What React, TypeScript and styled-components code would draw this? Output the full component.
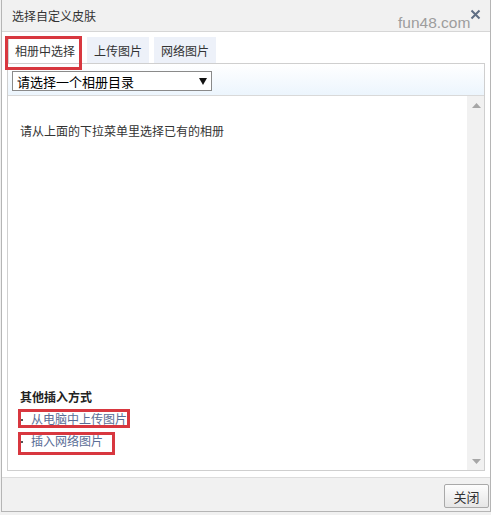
import React from "react";
import styled, { createGlobalStyle } from "styled-components";

const Global = createGlobalStyle`
  html, body { margin: 0; padding: 0; background: #f1f1f1; }
  body { font-family: "Noto Sans CJK SC", "Microsoft YaHei", sans-serif; font-size: 12px; color: #333; }
  * { box-sizing: border-box; }
`;

const Dialog = styled.div`
  position: relative;
  width: 490px;
  margin-left: 1px;
  height: 512px;
  display: flex;
  flex-direction: column;
  background: #f1f1f1;
  border-left: 1px solid #b5b5b5;
  border-right: 1px solid #b5b5b5;
  border-bottom: 1px solid #b5b5b5;
`;

const Header = styled.div`
  height: 32px;
  flex: none;
  display: flex;
  align-items: center;
  justify-content: space-between;
  padding: 0 9px 0 10px;
  border-bottom: 1px solid #d6d6d6;
`;

const Title = styled.div`
  font-size: 12px;
  color: #333;
  line-height: 31px;
`;

const CloseIcon = styled.svg`
  width: 11px;
  height: 11px;
  margin-top: -3px;
`;

const Watermark = styled.div`
  position: absolute;
  left: 396px;
  top: 14px;
  font-family: "Liberation Sans", Arial, sans-serif;
  font-size: 15.5px;
  color: #9d9d9d;
  pointer-events: none;
`;

const Body = styled.div`
  flex: none;
  height: 445px;
  background: #fff;
  padding: 5px 0 6px 5px;
`;

const TabRow = styled.div`
  display: flex;
  gap: 5px;
  height: 26px;
  padding-left: 1px;
`;

const Tab = styled.div<{ $active?: boolean; $boxed?: boolean }>`
  position: relative;
  height: 26px;
  line-height: 25px;
  padding: 0 6px;
  font-size: 12px;
  color: #333;
  background: ${(p) => (p.$active ? "#fff" : "#edf1f9")};
  border: 1px solid ${(p) => (p.$active ? "#d0d0d0" : "#edf1f9")};
  border-bottom: none;
  z-index: 2;
  ${(p) =>
    p.$boxed &&
    `&::after {
      content: "";
      position: absolute;
      left: -4px;
      top: -2px;
      right: -1px;
      bottom: -7px;
      border: 3px solid #d8373f;
      pointer-events: none;
    }`}
`;

const Panel = styled.div`
  width: 478px;
  height: 408px;
  border: 1px solid #cfcfcf;
  display: flex;
  flex-direction: column;
`;

const Toolbar = styled.div`
  height: 32px;
  flex: none;
  padding: 7px 0 0 4px;
  background: linear-gradient(#ffffff, #ecf5fd);
  border-bottom: 1px solid #d9d9d9;
`;

const SelectBox = styled.div`
  width: 200px;
  height: 20px;
  border: 1px solid #8a8a8a;
  background: #fff;
  display: flex;
  align-items: center;
  justify-content: space-between;
  padding: 0 4px 0 4px;
  font-size: 13px;
  color: #000;
`;

const Content = styled.div`
  flex: 1;
  display: flex;
  min-height: 0;
`;

const Main = styled.div`
  flex: 1;
  display: flex;
  flex-direction: column;
  padding: 26px 0 18px 12px;
`;

const Hint = styled.div`
  line-height: 18px;
  color: #333;
`;

const Others = styled.div`
  margin-top: auto;
  display: flex;
  flex-direction: column;
`;

const OthersTitle = styled.div`
  font-weight: bold;
  line-height: 22px;
  color: #222;
`;

const LinkItem = styled.div<{ $top: number; $bottom: number; $right: number }>`
  position: relative;
  align-self: flex-start;
  line-height: 22px;
  padding-left: 11px;
  color: #5a6d96;
  &::before {
    content: "";
    position: absolute;
    left: 1px;
    top: 11px;
    width: 2px;
    height: 2px;
    background: #555;
  }
  &::after {
    content: "";
    position: absolute;
    left: -2px;
    top: ${(p) => p.$top}px;
    right: ${(p) => p.$right}px;
    bottom: ${(p) => p.$bottom}px;
    border: 3px solid #d8373f;
    pointer-events: none;
  }
`;

const Scrollbar = styled.div`
  width: 17px;
  flex: none;
  background: #f1f1f1;
  display: flex;
  flex-direction: column;
  justify-content: space-between;
  align-items: center;
  padding: 7px 0 6px 1px;
`;

const Footer = styled.div`
  flex: 1;
  border-top: 1px solid #dcdcdc;
  display: flex;
  justify-content: flex-end;
  align-items: flex-start;
  padding: 6px 1px 0 0;
`;

const Button = styled.button`
  width: 45px;
  height: 24px;
  padding: 0;
  border: 1px solid #a9a9a9;
  border-radius: 2px;
  background: linear-gradient(#fdfdfd, #e6e6e6);
  font-family: "Noto Sans CJK SC", sans-serif;
  font-size: 13px;
  color: #333;
  cursor: pointer;
`;

export default function App() {
  return (
    <>
      <Global />
      <Dialog>
        <Header>
          <Title>选择自定义皮肤</Title>
          <CloseIcon viewBox="0 0 11 11">
            <path d="M1.5 1.5 L9.5 9.5 M9.5 1.5 L1.5 9.5" stroke="#5f6e84" strokeWidth="2" />
          </CloseIcon>
        </Header>
        <Watermark>fun48.com</Watermark>
        <Body>
          <TabRow>
            <Tab $active $boxed>相册中选择</Tab>
            <Tab>上传图片</Tab>
            <Tab>网络图片</Tab>
          </TabRow>
          <Panel>
            <Toolbar>
              <SelectBox>
                <span>请选择一个相册目录</span>
                <svg width="8" height="7" viewBox="0 0 8 7">
                  <polygon points="0,0 8,0 4,7" fill="#111" />
                </svg>
              </SelectBox>
            </Toolbar>
            <Content>
              <Main>
                <Hint>请从上面的下拉菜单里选择已有的相册</Hint>
                <Others>
                  <OthersTitle>其他插入方式</OthersTitle>
                  <LinkItem $top={1} $bottom={2} $right={-3}>从电脑中上传图片</LinkItem>
                  <LinkItem $top={2} $bottom={-3} $right={-12}>插入网络图片</LinkItem>
                </Others>
              </Main>
              <Scrollbar>
                <svg width="9" height="5" viewBox="0 0 9 5">
                  <polygon points="4.5,0 9,5 0,5" fill="#a6a6a6" />
                </svg>
                <svg width="9" height="5" viewBox="0 0 9 5">
                  <polygon points="0,0 9,0 4.5,5" fill="#a6a6a6" />
                </svg>
              </Scrollbar>
            </Content>
          </Panel>
        </Body>
        <Footer>
          <Button>关闭</Button>
        </Footer>
      </Dialog>
    </>
  );
}
